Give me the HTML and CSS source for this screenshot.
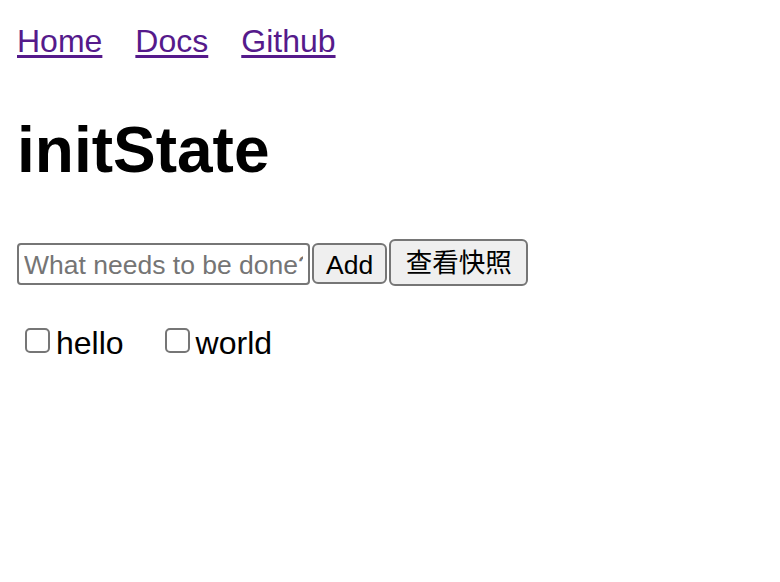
FILE: index.html
```html
<!DOCTYPE html>
<html lang="zh">
<head>
<meta charset="utf-8">
<title>initState</title>
<link rel="stylesheet" href="styles.css">
</head>
<body>
<div class="page">
  <nav class="nav">
    <a class="nav-link" href="#">Home</a>
    <a class="nav-link" href="#">Docs</a>
    <a class="nav-link" href="#">Github</a>
  </nav>
  <h1 class="title">initState</h1>
  <div class="form"><input class="todo-input" type="text" placeholder="What needs to be done?"><button class="btn">Add</button><button class="btn btn-cjk">查看快照</button></div>
  <ul class="todo-list">
    <li class="todo-item"><input class="check" type="checkbox"><span class="todo-text">hello</span></li>
    <li class="todo-item"><input class="check" type="checkbox"><span class="todo-text">world</span></li>
  </ul>
</div>
</body>
</html>
```

FILE: styles.css
```css
html, body {
  margin: 0;
  padding: 0;
  background: #ffffff;
}

body {
  font-family: "Liberation Sans", Arial, sans-serif;
  color: #000000;
}

.page {
  padding: 23px 16px 0 17px;
}

.nav {
  display: flex;
  gap: 33px;
  font-size: 32px;
  line-height: 36px;
}

.nav-link {
  color: #551a8b;
  text-decoration: underline;
  text-decoration-thickness: 3px;
  text-underline-offset: 3px;
}

.title {
  margin: 54px 0 0 0;
  font-size: 64px;
  line-height: 74px;
  font-weight: bold;
}

.form {
  margin-top: 54px;
  display: flex;
  align-items: center;
  gap: 2px;
}

.todo-input {
  box-sizing: border-box;
  width: 293px;
  height: 42px;
  margin: 0;
  padding: 4px 5px 0 5px;
  border: 2px solid #767676;
  border-radius: 4px;
  font-family: "Liberation Sans", Arial, sans-serif;
  font-size: 26.5px;
  color: #000;
  background: #fff;
  outline: none;
}

.todo-input::placeholder {
  color: #757575;
}

.btn {
  box-sizing: border-box;
  height: 41px;
  margin: 0;
  padding: 3px 12px 0 12px;
  border: 2px solid #767676;
  border-radius: 6px;
  background: #efefef;
  color: #000;
  font-family: "Liberation Sans", Arial, sans-serif;
  font-size: 26.5px;
  line-height: 1;
}

.btn-cjk {
  height: 47px;
  width: 139px;
  padding-top: 2px;
  font-family: "Liberation Sans", "Noto Sans CJK SC", sans-serif;
  margin-top: -2px;
}

.todo-list {
  list-style: none;
  margin: 39px 0 0 0;
  padding: 0;
  display: flex;
  gap: 33px;
}

.todo-item {
  display: flex;
  align-items: center;
  font-size: 32px;
  line-height: 36px;
}

.check {
  appearance: none;
  -webkit-appearance: none;
  box-sizing: border-box;
  width: 25px;
  height: 25px;
  margin: 0 6px 6px 8px;
  border: 2px solid #767676;
  border-radius: 5px;
  background: #fff;
}
```
